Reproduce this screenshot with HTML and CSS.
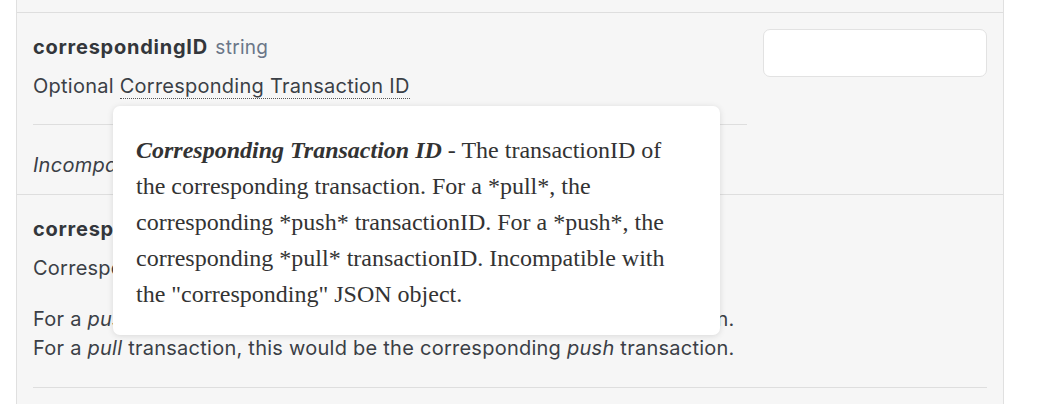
FILE: index.html
```html
<!DOCTYPE html>
<html>

<head>
    <link rel="stylesheet" href="styles.css">
</head>

<body>
    <div class="panel">
        <div class="row row-prev"></div>

        <!-- correspondingID -->
        <div class="row">
            <div class="param">
                <div class="param-main">
                    <div class="param-name">correspondingID <span class="param-type">string</span></div>
                    <p class="param-desc">Optional <span class="hint">Corresponding Transaction ID</span></p>
                </div>
                <p class="param-note"><em>Incompatible with the corresponding object.</em></p>
            </div>
            <div class="param-input">
                <input type="text" class="text-input">
            </div>
        </div>

        <!-- corresponding -->
        <div class="row row-wide">
            <div class="param-name">corresponding <span class="param-type">object</span></div>
            <p class="param-desc">Corresponding Transaction</p>
            <p class="param-text">For a <em>push</em> transaction, this would be the corresponding <em>pull</em> transaction.<br>
                For a <em>pull</em> transaction, this would be the corresponding <em>push</em> transaction.</p>
        </div>
    </div>

    <div class="tooltip">
        <b><i>Corresponding Transaction ID</i></b> - The transactionID of the corresponding transaction. For a *pull*, the
        corresponding *push* transactionID. For a *push*, the corresponding *pull* transactionID. Incompatible with
        the "corresponding" JSON object.
    </div>
</body>

</html>
```
FILE: styles.css
```css
body {
    margin: 0;
    background: #fff;
    font-family: Inter, "Liberation Sans", sans-serif;
    color: #3b3f46;
}

p {
    margin: 0;
}

.panel {
    margin-left: 16px;
    width: 986px;
    background: #f6f6f6;
    border-left: 1px solid #e0e0e0;
    border-right: 1px solid #e0e0e0;
    min-height: 404px;
}

.row {
    display: flex;
    gap: 16px;
    padding: 0 16px;
    border-bottom: 1px solid #dedede;
}

.row-prev {
    height: 12px;
}

.param {
    flex: 1;
    padding-top: 20px;
}

.param-main {
    padding-bottom: 24px;
    border-bottom: 1px solid #dedede;
}

.param-name {
    font-size: 20px;
    font-weight: 700;
    letter-spacing: 0.75px;
    color: #33363b;
    line-height: 28px;
}

.param-type {
    font-size: 19px;
    font-weight: normal;
    letter-spacing: 0.3px;
    color: #6b7688;
    margin-left: 2px;
}

.param-desc {
    font-size: 20px;
    letter-spacing: 0.25px;
    line-height: 28px;
    margin-top: 10px;
}

.hint {
    border-bottom: 1px dotted #555;
}

.param-note {
    font-size: 20px;
    letter-spacing: 0.25px;
    line-height: 28px;
    padding: 26px 0 15px;
}

.param-input {
    width: 224px;
    padding-top: 16px;
}

.text-input {
    box-sizing: border-box;
    width: 100%;
    height: 48px;
    background: #fff;
    border: 1px solid #e2e2e2;
    border-radius: 7px;
}

.row-wide {
    display: block;
    margin: 0 16px;
    padding: 20px 0 24px;
}

.row-wide .param-text {
    font-size: 20px;
    letter-spacing: 0.25px;
    line-height: 29px;
    margin-top: 23px;
}

.tooltip {
    position: absolute;
    left: 113px;
    top: 106px;
    width: 532px;
    padding: 26px 52px 23px 23px;
    background: #fff;
    border-radius: 7px;
    box-shadow: 0 1px 6px rgba(0, 0, 0, 0.12);
    font-family: "Liberation Serif", "Times New Roman", serif;
    font-size: 24px;
    line-height: 36px;
    color: #333;
}
```
